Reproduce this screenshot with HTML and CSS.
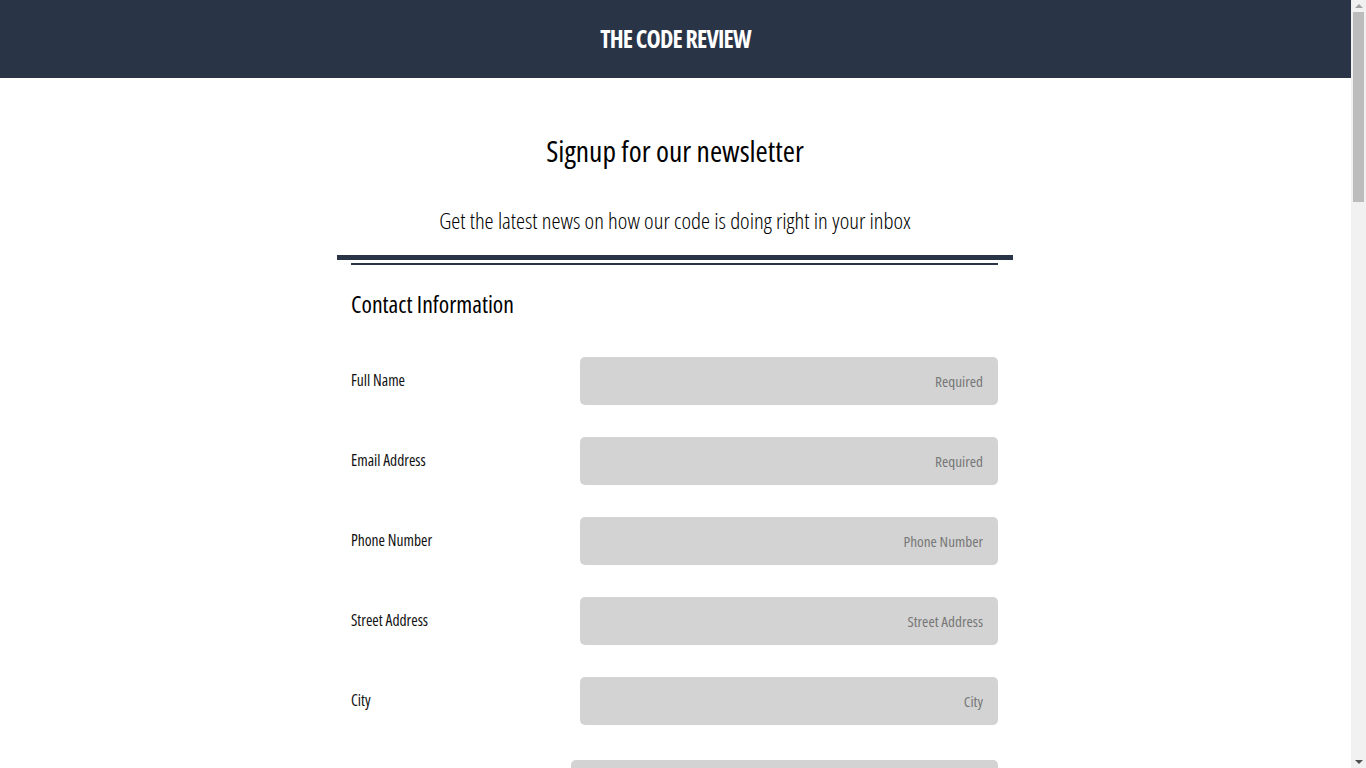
FILE: index.html
```html
<!DOCTYPE html>
<html lang="en">
<head>
<meta charset="utf-8">
<title>The Code Review</title>
<link rel="stylesheet" href="styles.css">
</head>
<body>
<header class="site-header">
  <h1 class="brand">THE CODE REVIEW</h1>
</header>
<main class="page">
  <h2 class="title">Signup for our newsletter</h2>
  <p class="subtitle">Get the latest news on how our code is doing right in your inbox</p>
  <form class="signup">
    <fieldset class="group">
      <h3 class="group-title">Contact Information</h3>
      <div class="row">
        <label class="label" for="name">Full Name</label>
        <input class="field" id="name" type="text" placeholder="Required">
      </div>
      <div class="row">
        <label class="label" for="email">Email Address</label>
        <input class="field" id="email" type="email" placeholder="Required">
      </div>
      <div class="row">
        <label class="label" for="phone">Phone Number</label>
        <input class="field" id="phone" type="tel" placeholder="Phone Number">
      </div>
      <div class="row">
        <label class="label" for="street">Street Address</label>
        <input class="field" id="street" type="text" placeholder="Street Address">
      </div>
      <div class="row">
        <label class="label" for="city">City</label>
        <input class="field" id="city" type="text" placeholder="City">
      </div>
      <div class="row row-wide">
        <label class="label" for="state">State</label>
        <div class="field field-box" id="state"></div>
      </div>
      <div class="row">
        <label class="label" for="zip">Zip Code</label>
        <input class="field" id="zip" type="text" placeholder="Zip Code">
      </div>
    </fieldset>
    <fieldset class="group">
      <h3 class="group-title">Newsletter</h3>
      <div class="row">
        <label class="label" for="freq">Frequency</label>
        <input class="field" id="freq" type="text" placeholder="Weekly">
      </div>
      <div class="row row-tall">
        <label class="label" for="notes">Comments</label>
        <textarea class="field field-area" id="notes" placeholder="Comments"></textarea>
      </div>
      <div class="actions">
        <button class="submit" type="submit">Submit</button>
      </div>
    </fieldset>
  </form>
</main>
<div class="scrollbar" aria-hidden="true">
  <span class="arrow arrow-up"></span>
  <span class="thumb"></span>
  <span class="arrow arrow-down"></span>
</div>
</body>
</html>
```
FILE: styles.css
```css
html, body {
  padding: 0;
}
html {
  margin: 0;
}
body {
  margin: 0 15px 0 0;
  font-family: "Open Sans", "Liberation Sans", sans-serif;
  font-stretch: 75%;
  color: #000;
  background: #fff;
}
.site-header {
  background: #293446;
  height: 78px;
  display: flex;
  align-items: center;
  justify-content: center;
}
.brand {
  margin: 0;
  color: #fff;
  font-size: 24px;
  line-height: 30px;
  font-weight: 700;
  letter-spacing: -0.8px;
}
.page {
  width: 676px;
  margin: 0 auto 0 calc((100% - 677px) / 2);
  padding-top: 53px;
  padding-bottom: 1200px;
}
.title {
  margin: 0;
  text-align: center;
  font-size: 29.5px;
  line-height: 40px;
  font-weight: 500;
}
.subtitle {
  margin: 35px 0 19px;
  text-align: center;
  font-size: 22.8px;
  line-height: 30px;
  font-weight: 300;
}
.signup {
  border-top: 5px solid #293446;
}
.group {
  margin: 3px 15px 0 14px;
  padding: 0;
  border: 0;
  border-top: 2px solid #293446;
  min-width: 0;
}
.group-title {
  margin: 24px 0 38px;
  font-size: 23.7px;
  line-height: 30px;
  font-weight: 500;
}
.row {
  display: flex;
  align-items: center;
  margin-bottom: 32px;
}
.label {
  width: 229px;
  flex: none;
  font-size: 15.5px;
  line-height: 20px;
  margin-top: -2px;
  color: #111;
}
.field {
  flex: 1;
  height: 48px;
  box-sizing: border-box;
  border: 0;
  border-radius: 5px;
  background: #d3d3d3;
  padding: 0 15px;
  text-align: right;
  font-family: inherit;
  font-stretch: 75%;
  font-size: 15.2px;
  color: #000;
}
.field::placeholder {
  color: #777;
}
.row-wide {
  margin-top: 35px;
}
.row-wide .label {
  width: 220px;
}
.field-box {
  height: 120px;
}
.field-area {
  height: 140px;
  padding-top: 14px;
  resize: none;
}
.actions {
  display: flex;
  justify-content: center;
  margin-top: 40px;
}
.submit {
  background: #293446;
  color: #fff;
  border: 0;
  border-radius: 5px;
  padding: 14px 40px;
  font-family: inherit;
  font-stretch: 75%;
  font-size: 18px;
}
.scrollbar {
  position: fixed;
  top: 0;
  right: 0;
  width: 15px;
  height: 100vh;
  background: #f1f1f1;
}
.thumb {
  position: absolute;
  left: 2px;
  top: 12px;
  width: 11px;
  height: 190px;
  background: #bcbcbc;
}
.arrow {
  position: absolute;
  left: 4px;
  width: 0;
  height: 0;
  border-left: 4px solid transparent;
  border-right: 4px solid transparent;
}
.arrow-up {
  top: 4px;
  border-bottom: 4px solid #a3a3a3;
}
.arrow-down {
  bottom: 4px;
  border-top: 4px solid #505050;
}
```
